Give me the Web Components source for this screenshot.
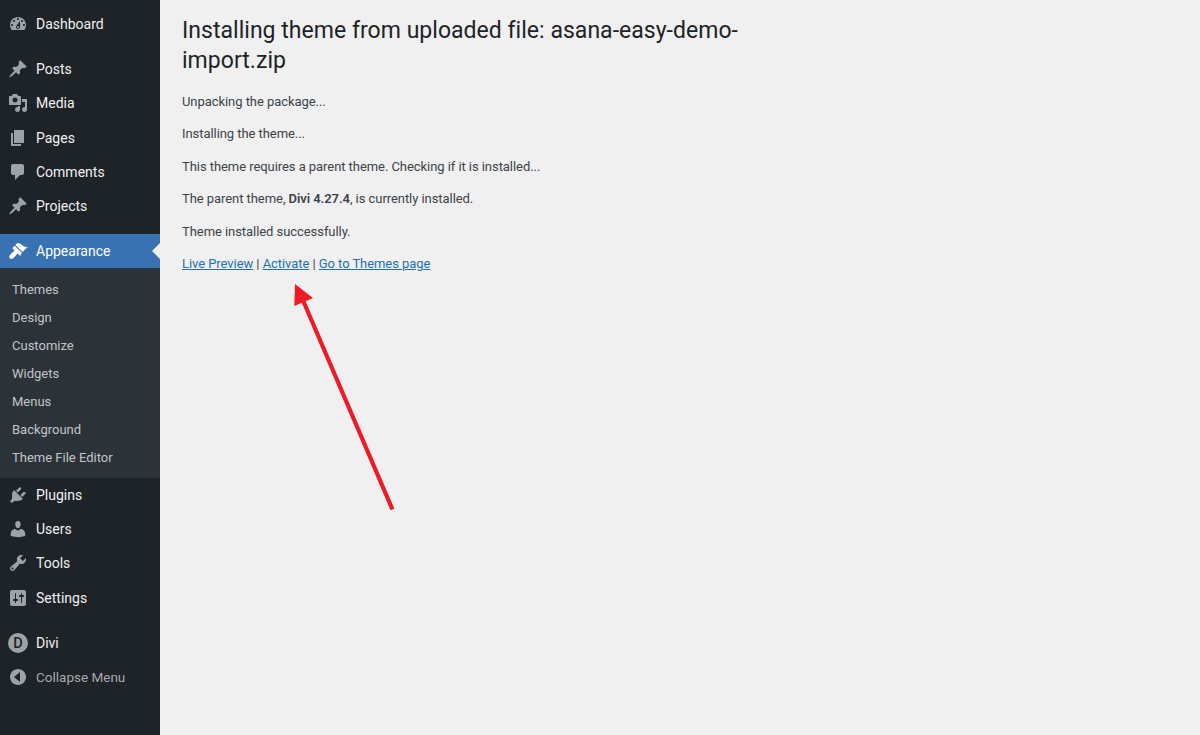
<!doctype html>
<html lang="en">
<head>
<meta charset="utf-8">
<title>Installing theme</title>
<style>
  html, body { margin: 0; height: 100%; background: #f0f0f1; overflow: hidden; }
  body { display: flex; font-family: Roboto, "Liberation Sans", sans-serif; }
</style>
</head>
<body>
<wp-sidebar>
  <wp-menu-item icon="dashboard">Dashboard</wp-menu-item>
  <wp-separator></wp-separator>
  <wp-menu-item icon="pin">Posts</wp-menu-item>
  <wp-menu-item icon="media">Media</wp-menu-item>
  <wp-menu-item icon="page">Pages</wp-menu-item>
  <wp-menu-item icon="comments">Comments</wp-menu-item>
  <wp-menu-item icon="pin">Projects</wp-menu-item>
  <wp-separator></wp-separator>
  <wp-menu-item icon="appearance" current>Appearance</wp-menu-item>
  <wp-submenu>
    <a>Themes</a>
    <a>Design</a>
    <a>Customize</a>
    <a>Widgets</a>
    <a>Menus</a>
    <a>Background</a>
    <a>Theme File Editor</a>
  </wp-submenu>
  <wp-menu-item icon="plugins">Plugins</wp-menu-item>
  <wp-menu-item icon="users">Users</wp-menu-item>
  <wp-menu-item icon="tools">Tools</wp-menu-item>
  <wp-menu-item icon="settings">Settings</wp-menu-item>
  <wp-separator></wp-separator>
  <wp-menu-item icon="divi">Divi</wp-menu-item>
  <wp-menu-item icon="collapse" dim>Collapse Menu</wp-menu-item>
</wp-sidebar>

<install-log>
  <span slot="title">Installing theme from uploaded file: asana-easy-demo-import.zip</span>
  <p>Unpacking the package...</p>
  <p>Installing the theme...</p>
  <p>This theme requires a parent theme. Checking if it is installed...</p>
  <p>The parent theme, <strong>Divi 4.27.4</strong>, is currently installed.</p>
  <p>Theme installed successfully.</p>
  <p><a href="#">Live Preview</a> | <a href="#">Activate</a> | <a href="#">Go to Themes page</a></p>
</install-log>

<red-arrow></red-arrow>

<script>
// dashicons, 20x20
const ICONS = {
  dashboard: '<path fill-rule="evenodd" d="M3.76 16h12.48c1.1-1.37 1.76-3.11 1.76-5 0-4.42-3.58-8-8-8s-8 3.58-8 8c0 1.89.66 3.63 1.76 5zM10 4c.55 0 1 .45 1 1s-.45 1-1 1-1-.45-1-1 .45-1 1-1zM6 6c.55 0 1 .45 1 1s-.45 1-1 1-1-.45-1-1 .45-1 1-1zm8 0c.55 0 1 .45 1 1s-.45 1-1 1-1-.45-1-1 .45-1 1-1zm-5.37 5.55L12 7v6c0 1.1-.9 2-2 2s-2-.9-2-2c0-.57.24-1.08.63-1.45zM4 10c.55 0 1 .45 1 1s-.45 1-1 1-1-.45-1-1 .45-1 1-1zm12 0c.55 0 1 .45 1 1s-.45 1-1 1-1-.45-1-1 .45-1 1-1zm-5 3c0-.55-.45-1-1-1s-1 .45-1 1 .45 1 1 1 1-.45 1-1z"/>',
  pin: '<path d="M10.44 3.02l1.82-1.82 6.36 6.35-1.83 1.82c-1.05-.68-2.48-.57-3.41.36l-.75.75c-.92.93-1.04 2.35-.35 3.41l-1.83 1.82-2.41-2.41-2.8 2.79c-.42.42-3.38 2.71-3.8 2.29s1.86-3.39 2.28-3.81l2.79-2.79L4.1 9.36l1.83-1.82c1.05.69 2.48.57 3.4-.36l.75-.75c.93-.92 1.05-2.35.36-3.41z"/>',
  media: '<path fill-rule="evenodd" d="M13 11V4c0-.55-.45-1-1-1h-1.67L9 1H5L3.67 3H2c-.55 0-1 .45-1 1v7c0 .55.45 1 1 1h10c.55 0 1-.45 1-1zM7 4.5c1.38 0 2.5 1.12 2.5 2.5S8.38 9.5 7 9.5 4.5 8.38 4.5 7 5.62 4.5 7 4.5zM14 6h5v10.5c0 1.38-1.12 2.5-2.5 2.5S14 17.88 14 16.5s1.12-2.5 2.5-2.5c.17 0 .34.02.5.05V9h-3V6zm-4 8.05V13h2v3.5c0 1.38-1.12 2.5-2.5 2.5S7 17.88 7 16.5 8.12 14 9.5 14c.17 0 .34.02.5.05z"/>',
  page: '<path d="M6 15V2h10v13H6zm-1 1h8v2H3V5h2v11z"/>',
  comments: '<path d="M5 2h9c1.1 0 2 .9 2 2v7c0 1.1-.9 2-2 2h-2l-5 5v-5H5c-1.1 0-2-.9-2-2V4c0-1.1.9-2 2-2z"/>',
  appearance: '<path d="M14.48 11.06L7.41 3.99l1.5-1.5c.5-.56 2.3-.47 3.51.32 1.21.8 1.43 1.28 2.91 2.1 1.18.64 2.45 1.26 4.45.85zm-.71.71L6.7 4.7 4.93 6.47c-.39.39-.39 1.02 0 1.41l1.06 1.06c.39.39.39 1.03 0 1.42-.6.6-1.84 1.23-2.63 2.02-.77.77-2.2 2.35-2.2 3.4 0 1.1 1.1 2.2 2.2 2.2 1.05 0 2.63-1.43 3.4-2.2.79-.79 1.42-2.03 2.02-2.63.39-.39 1.03-.39 1.42 0l1.06 1.06c.39.39 1.02.39 1.41 0z"/>',
  plugins: '<path d="M13.11 4.36L9.87 7.6 8 5.73l3.24-3.24c.35-.34 1.05-.2 1.56.32.52.51.66 1.21.31 1.55zm-8 1.77l.91-1.12 9.01 9.01-1.19.84c-.71.71-2.63 1.16-3.82 1.16H6.14L4.9 17.26c-.59.59-1.54.59-2.12 0-.59-.58-.59-1.53 0-2.12l1.24-1.24v-3.88c0-1.13.4-3.19 1.09-3.89zm7.26 3.97l3.24-3.24c.34-.35 1.04-.21 1.55.31.52.51.66 1.21.31 1.55l-3.24 3.25z"/>',
  users: '<path d="M10 9.25c-2.27 0-2.73-3.44-2.73-3.44C7 4.02 7.82 2 9.97 2c2.16 0 2.98 2.02 2.71 3.81 0 0-.41 3.44-2.68 3.44zm0 2.57L12.72 10c2.39 0 4.52 2.33 4.52 4.53v2.49s-3.65 1.13-7.24 1.13c-3.65 0-7.24-1.13-7.24-1.13v-2.49c0-2.25 1.94-4.48 4.47-4.48z"/>',
  tools: '<path fill-rule="evenodd" d="M16.68 9.77c-1.34 1.34-3.3 1.67-4.95.99l-5.41 6.52c-.99.99-2.59.99-3.58 0s-.99-2.59 0-3.57l6.52-5.42c-.68-1.65-.35-3.61.99-4.95 1.28-1.28 3.12-1.62 4.72-1.06l-2.89 2.89 2.82 2.82 2.86-2.87c.53 1.58.18 3.39-1.08 4.65zM3.81 16.21c.4.39 1.04.39 1.43 0 .4-.4.4-1.04 0-1.43-.39-.4-1.03-.4-1.43 0-.39.39-.39 1.03 0 1.43z"/>',
  settings: '<path fill-rule="evenodd" d="M18 16V4c0-1.1-.9-2-2-2H4c-1.1 0-2 .9-2 2v12c0 1.1.9 2 2 2h12c1.1 0 2-.9 2-2zM8 11h1c.55 0 1 .45 1 1s-.45 1-1 1H8v1.5c0 .28-.22.5-.5.5s-.5-.22-.5-.5V13H6c-.55 0-1-.45-1-1s.45-1 1-1h1V5.5c0-.28.22-.5.5-.5s.5.22.5.5V11zm5-2h-1c-.55 0-1-.45-1-1s.45-1 1-1h1V5.5c0-.28.22-.5.5-.5s.5.22.5.5V7h1c.55 0 1 .45 1 1s-.45 1-1 1h-1v5.5c0 .28-.22.5-.5.5s-.5-.22-.5-.5V9z"/>',
  divi: '<circle cx="10" cy="10" r="10"/><text x="10" y="15" text-anchor="middle" font-size="14.500" font-weight="500" fill="#1d2327" font-family="Roboto, sans-serif">D</text>',
  collapse: '<path fill-rule="evenodd" d="M18 10c0-4.42-3.58-8-8-8s-8 3.58-8 8 3.58 8 8 8 8-3.58 8-8zm-6-5v10l-6-5z"/>'
};

class WpSidebar extends HTMLElement {
  constructor() {
    super();
    this.attachShadow({ mode: "open" }).innerHTML = `
      <style>
        :host {
          display: flex;
          flex-direction: column;
          flex: 0 0 160px;
          box-sizing: border-box;
          width: 160px;
          height: 735px;
          padding-top: 7px;
          background: #1d2327;
        }
      </style>
      <slot></slot>
    `;
  }
}

class WpSeparator extends HTMLElement {
  constructor() {
    super();
    this.attachShadow({ mode: "open" }).innerHTML = `
      <style>:host { display: block; flex: 0 0 11px; }</style>
    `;
  }
}

class WpMenuItem extends HTMLElement {
  constructor() {
    super();
    const icon = ICONS[this.getAttribute("icon")] || "";
    this.attachShadow({ mode: "open" }).innerHTML = `
      <style>
        :host {
          display: flex;
          align-items: center;
          position: relative;
          flex: 0 0 34.2px;
          color: #f0f0f1;
          font-size: 14px;
          line-height: 18.2px;
          white-space: nowrap;
        }
        svg {
          flex: 0 0 20px;
          width: 20px;
          height: 20px;
          margin: 0 8px;
          fill: #9ca2a7;
          color: #9ca2a7;
        }
        :host([current]) { background: #3872b2; color: #fff; }
        :host([current]) svg { fill: #fff; color: #fff; }
        :host([current])::after {
          content: "";
          position: absolute;
          right: 0;
          top: 50%;
          margin-top: -8px;
          border: 8px solid transparent;
          border-right-color: #f0f0f1;
          border-left-width: 0;
        }
        :host([dim]) { color: #a7aaad; font-size: 13.5px; }
      </style>
      <svg viewBox="0 0 20 20" aria-hidden="true">${icon}</svg>
      <slot></slot>
    `;
  }
}

class WpSubmenu extends HTMLElement {
  constructor() {
    super();
    this.attachShadow({ mode: "open" }).innerHTML = `
      <style>
        :host {
          display: flex;
          flex-direction: column;
          flex: 0 0 auto;
          padding: 7.4px 0 6.3px;
          background: #2c3338;
          color: #c3c4c7;
          font-size: 13px;
          line-height: 18px;
        }
        ::slotted(a) { display: block; padding: 5px 12px; }
      </style>
      <slot></slot>
    `;
  }
}

class InstallLog extends HTMLElement {
  constructor() {
    super();
    this.attachShadow({ mode: "open" }).innerHTML = `
      <style>
        :host {
          display: block;
          flex: 1;
          min-width: 0;
          padding: 16px 22px 0;
          color: #3c434a;
          font-size: 13px;
          line-height: 19.5px;
        }
        h1 {
          max-width: 570px;
          margin: 0 0 15.8px;
          color: #1d2327;
          font-size: 23px;
          font-weight: 400;
          line-height: 29.9px;
          letter-spacing: .03px;
        }
        ::slotted(p) { margin: 0 0 13px; letter-spacing: -.06px; }
      </style>
      <h1><slot name="title"></slot></h1>
      <slot></slot>
    `;
  }
}

// annotation laid over the page, not part of the page's own flow
class RedArrow extends HTMLElement {
  constructor() {
    super();
    this.attachShadow({ mode: "open" }).innerHTML = `
      <style>
        :host { position: absolute; left: 0; top: 0; width: 1200px; height: 735px; pointer-events: none; }
        svg { display: block; }
      </style>
      <svg width="1200" height="735" viewBox="0 0 1200 735" aria-hidden="true">
        <path d="M392.5 509.500L302 298" stroke="#ed1c24" stroke-width="4.200" fill="none"/>
        <path d="M295 284L294.300 306L313 298Z" fill="#ed1c24"/>
      </svg>
    `;
  }
}

customElements.define("wp-sidebar", WpSidebar);
customElements.define("wp-separator", WpSeparator);
customElements.define("wp-menu-item", WpMenuItem);
customElements.define("wp-submenu", WpSubmenu);
customElements.define("install-log", InstallLog);
customElements.define("red-arrow", RedArrow);
</script>
<style>
  install-log a { color: #2271b1; }
  install-log strong { font-weight: 600; }
</style>
</body>
</html>
